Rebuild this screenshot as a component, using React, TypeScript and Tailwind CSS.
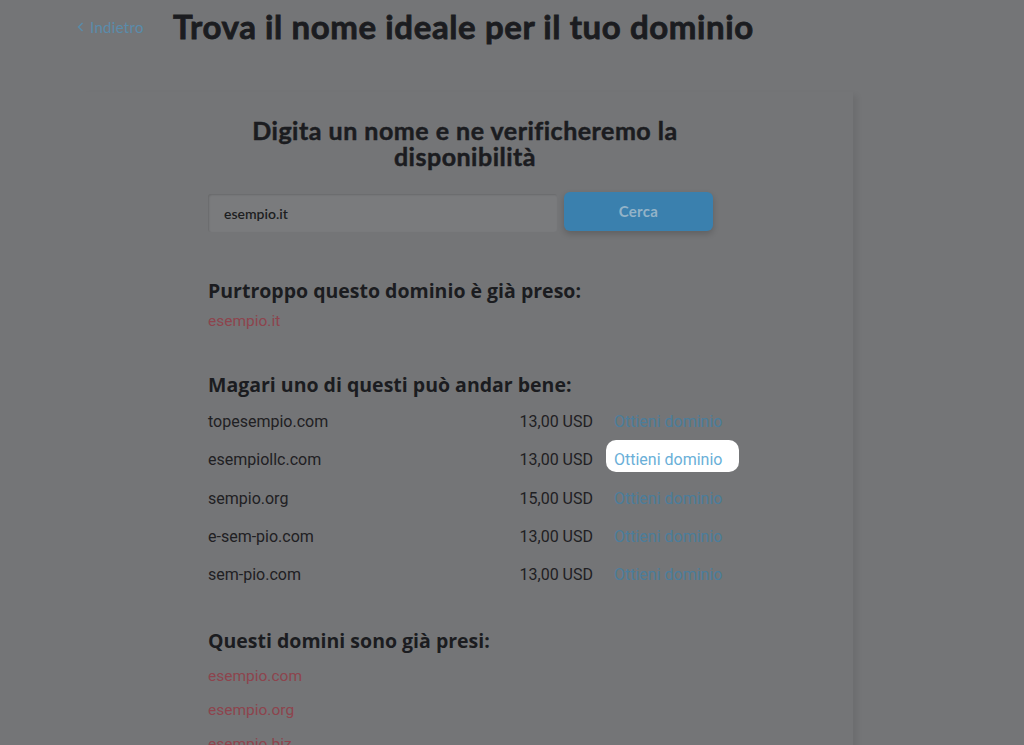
import React from "react";

const rows = [
  { name: "topesempio.com", price: "13,00 USD" },
  { name: "esempiollc.com", price: "13,00 USD", hi: true },
  { name: "sempio.org", price: "15,00 USD" },
  { name: "e-sem-pio.com", price: "13,00 USD" },
  { name: "sem-pio.com", price: "13,00 USD" },
];

const taken = ["esempio.com", "esempio.org", "esempio.biz"];

export default function App() {
  return (
    <div className="w-[1024px] h-[745px] overflow-hidden bg-[#747577] text-[#1b1c20]">
      <div className="flex items-center h-[54px] pl-[77px]">
        <div className="flex items-center gap-[6px] text-[15px] text-[#5a8cab] w-[96px] tracking-[0.3px]" style={{ fontFamily: "Lato, sans-serif" }}>
          <svg width="7" height="10" viewBox="0 0 7 10" fill="none" stroke="#5a8cab" strokeWidth="1.4">
            <path d="M5.5 1 L1.5 5 L5.5 9" />
          </svg>
          <span>Indietro</span>
        </div>
        <h1 className="text-[33px] font-bold tracking-[0.6px] [-webkit-text-stroke:0.8px_#1b1c20]" style={{ fontFamily: "Lato, sans-serif" }}>
          Trova il nome ideale per il tuo dominio
        </h1>
      </div>
      <div className="ml-[77px] mt-[38px] w-[776px] h-[700px] shadow-[7px_0_6px_-3px_rgba(0,0,0,0.07)] pt-[25px]">
        <div className="w-[514px] mx-auto">
          <div className="text-[25px] leading-[26px] font-bold text-center tracking-[0.5px] [-webkit-text-stroke:0.5px_#1b1c20]" style={{ fontFamily: "Lato, sans-serif" }}>
            <h2>Digita un nome e ne verificheremo la</h2>
            <h2>disponibilità</h2>
          </div>
          <div className="flex mt-[23px] gap-[7px]">
            <div className="w-[349px] h-[38px] mt-[2px] bg-[#7a7b7d] rounded-[3px] shadow-[inset_1px_1px_2px_rgba(0,0,0,0.15)] flex items-center pl-[16px] text-[14px] font-semibold text-[#1d1e21]" style={{ fontFamily: "Lato, sans-serif" }}>
              esempio.it
            </div>
            <div className="w-[149px] h-[39px] bg-[#3a80ae] rounded-[6px] shadow-[0_3px_6px_rgba(0,0,0,0.18)] flex items-center justify-center text-[15px] font-bold text-[#93b3c8] tracking-[0.3px]" style={{ fontFamily: "Lato, sans-serif" }}>
              Cerca
            </div>
          </div>
          <h3 className="mt-[47px] text-[19.5px] leading-[24px] font-bold" style={{ fontFamily: "'Open Sans', sans-serif" }}>
            Purtroppo questo dominio è già preso:
          </h3>
          <div className="mt-[8px] text-[15.5px] leading-[20px] text-[#8d444d]" style={{ fontFamily: "Roboto, sans-serif" }}>
            esempio.it
          </div>
          <h3 className="mt-[42px] text-[19.5px] leading-[24px] font-bold" style={{ fontFamily: "'Open Sans', sans-serif" }}>
            Magari uno di questi può andar bene:
          </h3>
          <div className="mt-[6px] flex flex-col" style={{ fontFamily: "Roboto, sans-serif" }}>
            {rows.map((r) => (
              <div key={r.name} className="flex items-center h-[38.3px] text-[16px] text-[#1f2023]">
                <span className="flex-1">{r.name}</span>
                <span className="w-[120px] text-right">{r.price}</span>
                <span className={"relative ml-[21px] w-[108px] whitespace-nowrap " + (r.hi ? "text-[#6aafd8]" : "text-[#4b7d9b]")}>
                  {r.hi && (
                    <span className="absolute left-[-8px] top-[-8px] w-[133px] h-[32px] rounded-[10px] bg-white" />
                  )}
                  <span className="relative">Ottieni dominio</span>
                </span>
              </div>
            ))}
          </div>
          <h3 className="mt-[35px] text-[19.5px] leading-[24px] font-bold" style={{ fontFamily: "'Open Sans', sans-serif" }}>
            Questi domini sono già presi:
          </h3>
          <div className="mt-[6px] flex flex-col text-[15.5px] text-[#8d444d]" style={{ fontFamily: "Roboto, sans-serif" }}>
            {taken.map((t) => (
              <div key={t} className="h-[34px] flex items-center">{t}</div>
            ))}
          </div>
        </div>
      </div>
    </div>
  );
}
